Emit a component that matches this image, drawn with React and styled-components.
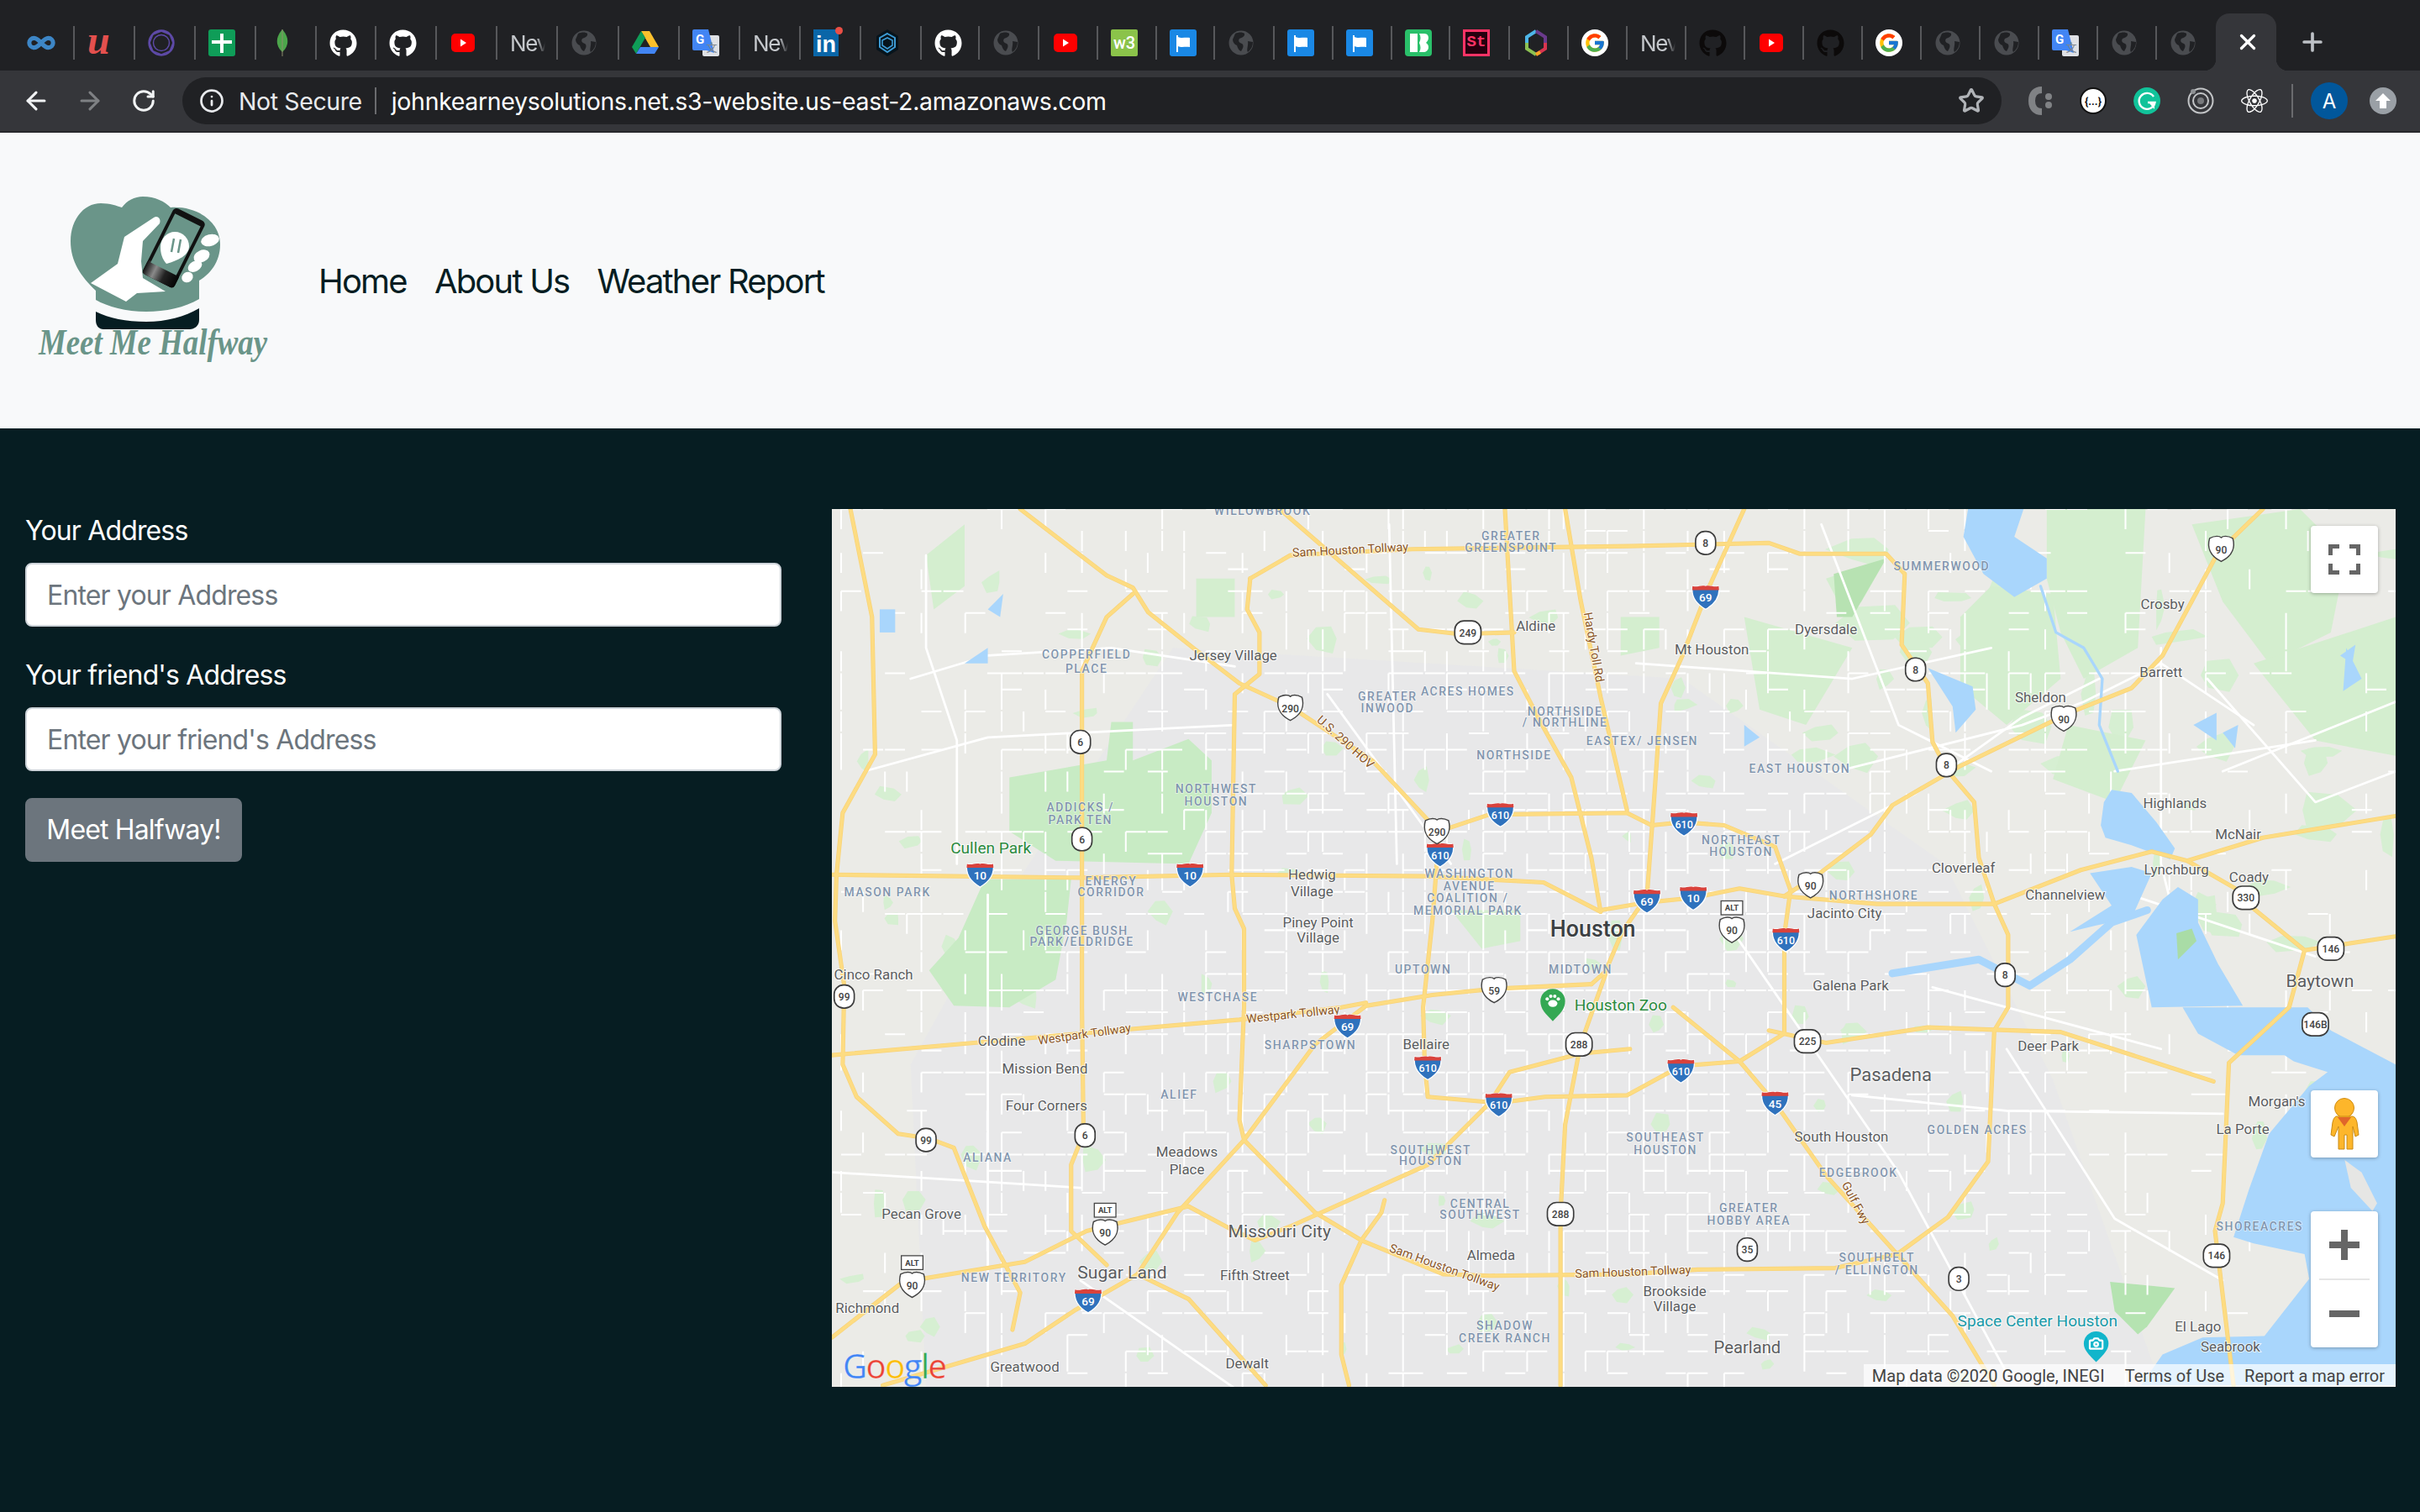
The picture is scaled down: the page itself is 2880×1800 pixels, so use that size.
import styled, { createGlobalStyle } from 'styled-components';
import { FaGithub, FaReact } from 'react-icons/fa';
import { FcGoogle } from 'react-icons/fc';
import { ArrowLeft, ArrowRight, RotateCw, Info, Star, X, Plus, Infinity as InfinityIcon, Camera } from 'lucide-react';

const UI_FONT = `Inter, "Liberation Sans", sans-serif`;
const MAP_FONT = `Roboto, "Liberation Sans", sans-serif`;

const GlobalStyle = createGlobalStyle`
  html, body { margin: 0; padding: 0; background: #061d22; }
  * { box-sizing: border-box; }
`;

const tabs = [
  ['infinity', 72], ['u', 72], ['ring', 72], ['cross', 72], ['leaf', 72], ['github', 71], ['github', 72], ['youtube', 72],
  ['nev', 72], ['globe', 73], ['drive', 72], ['translate', 72], ['nev', 72], ['linkedin', 72], ['hex', 72], ['github', 69],
  ['globe', 71], ['youtube', 70], ['w3', 70], ['flag', 69], ['globe', 71], ['flag', 70], ['flag', 70], ['bolt', 69],
  ['st', 71], ['hexcolor', 70], ['google', 70], ['nev', 70], ['githubdark', 70], ['youtube', 70], ['githubdark', 70],
  ['google', 70], ['globe', 70], ['globe', 70], ['translate', 70], ['globe', 70], ['globe', 70],
];

const TabIcon = ({ kind }) => {
  switch (kind) {
    case 'infinity':
      return <InfinityIcon size={34} color="#3d86c6" strokeWidth={3.6} />;
    case 'u':
      return <ULogo>u</ULogo>;
    case 'ring':
      return (
        <svg width="32" height="32" viewBox="0 0 32 32" fill="none" stroke="#5e4aa8">
          <circle cx="16" cy="16" r="14.5" strokeWidth="2.4" />
          <circle cx="16" cy="16" r="9.5" strokeWidth="1.4" />
          <path d="M16 2 26 6 30 16 26 26 16 30 6 26 2 16 6 6Z" strokeWidth="1.4" />
        </svg>
      );
    case 'cross':
      return (
        <svg width="32" height="32" viewBox="0 0 32 32">
          <rect width="32" height="32" rx="3" fill="#0f9d58" />
          <path d="M14 5h4v8h10v4H18v11h-4V17H4v-4h10z" fill="#fff" />
        </svg>
      );
    case 'leaf':
      return (
        <svg width="32" height="32" viewBox="0 0 32 32">
          <path d="M16 0c5 6 7 11 6 17-1 5-4 8-6 10-2-2-5-5-6-10-1-6 1-11 6-17z" fill="#4ca64b" />
          <path d="M16 0v32" stroke="#8d8d6d" strokeWidth="1" />
        </svg>
      );
    case 'github':
      return <FaGithub size={33} color="#fff" />;
    case 'githubdark':
      return <FaGithub size={33} color="#0c0a0a" />;
    case 'youtube':
      return (
        <svg width="32" height="32" viewBox="0 0 32 32">
          <rect x="2" y="5" width="28" height="22" rx="5" fill="#f00" />
          <path d="M13 11.500 20 16l-7 4.500z" fill="#fff" />
        </svg>
      );
    case 'nev':
      return <NewTabText>Nev</NewTabText>;
    case 'globe':
      return (
        <svg width="32" height="32" viewBox="0 0 32 32">
          <circle cx="16" cy="16" r="14.500" fill="#4a4c50" />
          <path d="M9 5c4-2 9-2 11 0 1 3-3 5-6 6-2 3 0 5 3 6 3 2 1 6-1 9-3-1-4-4-5-7-3-1-5-4-5-7zM24 14l6 1c0 5-2 9-6 12-2-3 1-8 0-13z" fill="#202124" />
        </svg>
      );
    case 'drive':
      return (
        <svg width="32" height="32" viewBox="0 0 32 32">
          <path d="M11 2h10l11 19H22z" fill="#fbc02d" />
          <path d="M11 2 0 21l5 8 11-19z" fill="#0f9d58" />
          <path d="M10 21h22l-5 8H5z" fill="#4285f4" />
        </svg>
      );
    case 'translate':
      return (
        <svg width="32" height="32" viewBox="0 0 32 32">
          <rect x="12" y="7" width="20" height="25" rx="2" fill="#dfe1e5" />
          <path d="M0 2a2 2 0 0 1 2-2h17l7 28-9-3H2a2 2 0 0 1-2-2z" fill="#4285f4" />
          <text x="9" y="17" fontFamily={MAP_FONT} fontSize="15" fontWeight="700" fill="#fff" textAnchor="middle">G</text>
          <text x="23" y="26" fontFamily={`"Noto Sans CJK SC", sans-serif`} fontSize="13" fill="#80868b" textAnchor="middle">文</text>
        </svg>
      );
    case 'linkedin':
      return <LinkedIn>in</LinkedIn>;
    case 'hex':
      return (
        <svg width="32" height="32" viewBox="0 0 32 32">
          <path d="M16 0 29 8v16L16 32 3 24V8z" fill="#07141c" />
          <path d="M16 5 25 10v11l-9 6-9-6V10z" fill="none" stroke="#3d9bd4" strokeWidth="2" />
          <path d="M10 13l6-3 6 3v6l-6 4-6-4z" fill="none" stroke="#3d9bd4" strokeWidth="1.6" />
        </svg>
      );
    case 'w3':
      return <W3Logo>w3</W3Logo>;
    case 'flag':
      return (
        <svg width="32" height="32" viewBox="0 0 32 32">
          <rect width="32" height="32" rx="3" fill="#1a88e5" />
          <path d="M8 7h2v2c4 2 9 0 14 1v11c-5-1-10 1-14-1v7H8z" fill="#fff" />
        </svg>
      );
    case 'bolt':
      return (
        <svg width="32" height="32" viewBox="0 0 32 32">
          <rect width="32" height="32" rx="4" fill="#2ac06a" />
          <path d="M6 5h9v22H6zM17 5h6c4 0 5 3 5 5 0 3-2 5-3 6 2 1 3 3 3 5 0 4-3 6-6 6h-5c2-3 2-7 0-11 2-4 2-8 0-11z" fill="#fff" />
        </svg>
      );
    case 'st':
      return <StLogo>St</StLogo>;
    case 'hexcolor':
      return (
        <svg width="32" height="32" viewBox="0 0 32 32" fill="none" strokeWidth="4">
          <path d="M16 2 5 9v7" stroke="#4db6e8" />
          <path d="M16 2l11 7v7" stroke="#6a3a8c" />
          <path d="M27 16v7L16 30" stroke="#d8354f" />
          <path d="M5 16v7l11 7" stroke="#8cc152" />
          <path d="M16 30l5-3" stroke="#f5a623" />
        </svg>
      );
    case 'google':
      return <GoogleCircle><FcGoogle size={26} /></GoogleCircle>;
    default:
      return null;
  }
};

const TabStrip = styled.div`
  height: 84px;
  background: #202124;
  display: flex;
  align-items: flex-start;
  padding: 16px 0 0 17px;
`;

const Tab = styled.div`
  width: ${(p) => p.$width}px;
  height: 40px;
  margin-top: 15px;
  padding-left: 15px;
  display: flex;
  align-items: center;
  justify-content: flex-start;
  border-right: ${(p) => (p.$last ? 'none' : '2px solid #57585b')};
`;

const ActiveTab = styled.div`
  position: relative;
  width: 72px;
  height: 68px;
  background: #35363a;
  border-radius: 16px 16px 0 0;
  display: flex;
  align-items: center;
  justify-content: center;
  padding: 0 0 1px 3px;
  color: #fff;

  &::before, &::after {
    content: '';
    position: absolute;
    bottom: 0;
    width: 14px;
    height: 14px;
  }
  &::before {
    left: -14px;
    background: radial-gradient(circle at 0 0, transparent 14px, #35363a 14.5px);
  }
  &::after {
    right: -14px;
    background: radial-gradient(circle at 100% 0, transparent 14px, #35363a 14.5px);
  }
`;

const NewTabButton = styled.div`
  margin: 17px 0 0 26px;
  color: #bdc1c6;
  display: flex;
`;

const ULogo = styled.span`
  font: italic 700 48px "Liberation Serif", serif;
  color: #e4504e;
  line-height: 32px;
  margin-top: -6px;
`;

const NewTabText = styled.span`
  width: 42px;
  overflow: hidden;
  font: 400 26px ${UI_FONT};
  letter-spacing: -1.4px;
  color: #c4c7cb;
  white-space: nowrap;
  -webkit-mask-image: linear-gradient(90deg, #000 75%, transparent);
  mask-image: linear-gradient(90deg, #000 75%, transparent);
`;

const LinkedIn = styled.span`
  width: 30px;
  height: 32px;
  background: #0a66a8;
  color: #fff;
  font: 700 27px "Liberation Sans", sans-serif;
  line-height: 36px;
  text-align: center;
  position: relative;

  &::after {
    content: '';
    position: absolute;
    top: -3px;
    right: -5px;
    width: 9px;
    height: 9px;
    border-radius: 50%;
    background: #ea4f46;
  }
`;

const W3Logo = styled.span`
  width: 32px;
  height: 32px;
  background: #8bc34a;
  border-radius: 2px;
  color: #fff;
  font: 500 20px ${MAP_FONT};
  line-height: 32px;
  text-align: center;
`;

const StLogo = styled.span`
  width: 32px;
  height: 32px;
  background: #26000f;
  border: 3px solid #ff3366;
  color: #ff3366;
  font: 700 19px "Liberation Mono", monospace;
  line-height: 25px;
  text-align: center;
`;

const GoogleCircle = styled.span`
  width: 32px;
  height: 32px;
  border-radius: 50%;
  background: #fff;
  display: flex;
  align-items: center;
  justify-content: center;
`;

const Toolbar = styled.div`
  height: 74px;
  background: #35363a;
  border-bottom: 2px solid #27282b;
  display: flex;
  align-items: center;
  padding-left: 11px;
`;

const NavButton = styled.div`
  width: 64px;
  height: 56px;
  display: flex;
  align-items: center;
  justify-content: center;
  color: ${(p) => (p.$disabled ? '#7f8184' : '#f1f3f4')};
`;

const Omnibox = styled.div`
  width: 2165px;
  height: 56px;
  margin-left: 14px;
  border-radius: 28px;
  background: #202124;
  display: flex;
  align-items: center;
  padding: 0 20px 0 20px;
  font: 400 28.5px ${UI_FONT};
  color: #e8eaed;
`;

const SecureText = styled.span`
  margin-left: 17px;
  letter-spacing: -0.4px;
`;

const OmniDivider = styled.span`
  width: 2px;
  height: 32px;
  margin: 0 18px 0 15px;
  background: #6a6b6e;
`;

const UrlText = styled.span`
  color: #fff;
  letter-spacing: -0.34px;
`;

const StarButton = styled.span`
  margin-left: auto;
  display: flex;
  color: #b0b3b7;
`;

const Extensions = styled.div`
  display: flex;
  align-items: center;
  margin-left: 13px;
  height: 56px;
`;

const ExtButton = styled.div`
  width: 64px;
  height: 56px;
  display: flex;
  align-items: center;
  justify-content: center;
`;

const ToolbarDivider = styled.span`
  width: 2px;
  height: 40px;
  margin: 0 21px 0 12px;
  background: #6a6b6e;
`;

const Avatar = styled.span`
  width: 44px;
  height: 44px;
  border-radius: 50%;
  background: #01579b;
  color: #fff;
  font: 400 24px ${UI_FONT};
  display: flex;
  align-items: center;
  justify-content: center;
`;

const UpgradeDot = styled.span`
  width: 32px;
  height: 32px;
  margin-left: 26px;
  border-radius: 50%;
  background: #9aa0a6;
  display: flex;
  align-items: center;
  justify-content: center;
`;

const Header = styled.header`
  height: 352px;
  background: #f8f9fa;
  display: flex;
  align-items: center;
  padding-left: 30px;
`;

const NavLinks = styled.nav`
  display: flex;
  gap: 33px;
  margin: 0 0 0 29px;
`;

const NavLink = styled.a`
  font: 400 40px ${UI_FONT};
  letter-spacing: -1.8px;
  color: #061d22;
  text-decoration: none;
`;

const Main = styled.main`
  display: flex;
  align-items: flex-start;
  gap: 60px;
  min-height: 1290px;
  padding: 96px 29px 0 30px;
  background: #061d22;
`;

const Form = styled.form`
  width: 900px;
  flex: none;
  font: 400 32px/48px ${UI_FONT};
  letter-spacing: -0.85px;
`;

const FieldLabel = styled.label`
  display: block;
  color: #fff;
  padding-top: 2px;
  margin-bottom: 14px;
`;

const TextInput = styled.input`
  display: block;
  width: 100%;
  height: 76px;
  margin-bottom: 32px;
  padding: 0 24px;
  border: 2px solid #ced4da;
  border-radius: 8px;
  background: #fff;
  font: inherit;
  letter-spacing: inherit;
  outline: none;

  &::placeholder { color: #6c757d; opacity: 1; }
`;

const SubmitButton = styled.button`
  height: 76px;
  width: 258px;
  padding: 0;
  border: 2px solid #6c757d;
  border-radius: 8px;
  background: #6c757d;
  color: #fff;
  font: inherit;
  letter-spacing: inherit;
`;

const MapFrame = styled.section`
  position: relative;
  width: 1861px;
  height: 1045px;
  flex: none;
  overflow: hidden;
  background: #ebebe7;
`;

const MapCanvas = styled.svg`
  display: block;
  width: 100%;
  height: 100%;
`;

const PlaceText = styled.text`
  font-family: ${MAP_FONT};
  font-size: ${(p) => p.$size || 9.2}px;
  font-weight: ${(p) => p.$weight || 400};
  fill: ${(p) => p.$color || '#5b5d60'};
  text-anchor: middle;
  stroke: #fff;
  stroke-width: 1.1px;
  stroke-opacity: 0.75;
  paint-order: stroke;
`;

const DistrictText = styled.text`
  font-family: ${MAP_FONT};
  font-size: 7.6px;
  font-weight: 500;
  letter-spacing: 0.85px;
  fill: #8195ae;
  text-anchor: middle;
  stroke: #fff;
  stroke-width: 0.8px;
  stroke-opacity: 0.6;
  paint-order: stroke;
`;

const RoadText = styled.text`
  font-family: ${MAP_FONT};
  font-size: 7.8px;
  fill: #8a5526;
  text-anchor: middle;
  stroke: #fff;
  stroke-width: 1px;
  stroke-opacity: 0.8;
  paint-order: stroke;
`;

const ShieldText = styled.text`
  font-family: ${MAP_FONT};
  font-size: ${(p) => p.$size || 6.6}px;
  font-weight: ${(p) => p.$weight || 500};
  fill: ${(p) => p.$color || '#444'};
  text-anchor: middle;
`;

const MapControl = styled.div`
  position: absolute;
  right: 21px;
  top: ${(p) => p.$top}px;
  width: 80px;
  height: ${(p) => p.$height}px;
  background: #fff;
  border-radius: 4px;
  box-shadow: 0 1px 4px rgba(0, 0, 0, 0.3);
  display: flex;
  flex-direction: column;
  align-items: center;
  justify-content: center;
`;

const ZoomPart = styled.div`
  flex: 1;
  width: 100%;
  display: flex;
  align-items: center;
  justify-content: center;
`;

const ZoomDivider = styled.div`
  width: 60px;
  height: 2px;
  background: #e6e6e6;
`;

const Attribution = styled.div`
  position: absolute;
  right: 0;
  bottom: 0;
  height: 27px;
  padding: 0 13px 0 10px;
  display: flex;
  align-items: center;
  gap: 24px;
  background: rgba(255, 255, 255, 0.7);
  font: 400 20px ${MAP_FONT};
  color: #444;
  white-space: nowrap;
`;

const GoogleMark = styled.div`
  position: absolute;
  left: 13px;
  bottom: 2px;
  font: 500 40px "Open Sans", sans-serif;
  letter-spacing: -1.5px;
  line-height: 46px;
  -webkit-text-stroke: 0.5px rgba(255, 255, 255, 0.5);
`;

const MarkLetter = styled.span`
  color: ${(p) => p.$color};
`;

const towns = [
  ['Aldine', 995, 409], ['Jersey Village', 799, 428], ['Mt Houston', 1109, 424], ['Dyersdale', 1183, 411], ['Crosby', 1401, 395],
  ['Barrett', 1400, 439], ['Sheldon', 1322, 455], ['Highlands', 1409, 524], ['McNair', 1450, 544], ['Lynchburg', 1410, 567],
  ['Coady', 1457, 572], ['Channelview', 1338, 583], ['Cloverleaf', 1272, 566], ['Jacinto City', 1195, 595], ['Galena Park', 1199, 642],
  ['Baytown', 1503, 640, 11.5], ['Deer Park', 1327, 681], ['Pasadena', 1225, 701, 12], ["Morgan's", 1475, 717], ['La Porte', 1453, 735],
  ['South Houston', 1193, 740], ['Bellaire', 924, 680], ['Clodine', 649, 678], ['Mission Bend', 677, 696], ['Four Corners', 678, 720],
  ['Meadows', 769, 750], ['Place', 769, 761], ['Hedwig', 850, 570], ['Village', 850, 581], ['Piney Point', 854, 601], ['Village', 854, 611],
  ['Cinco Ranch', 566, 635], ['Pecan Grove', 597, 790], ['Missouri City', 829, 802, 11.5], ['Sugar Land', 727, 829, 11.5],
  ['Fifth Street', 813, 830], ['Almeda', 966, 817], ['Brookside', 1085, 840], ['Village', 1085, 850], ['Richmond', 562, 851],
  ['Greatwood', 664, 889], ['Dewalt', 808, 887], ['Pearland', 1132, 877, 11], ['El Lago', 1424, 863], ['Seabrook', 1445, 876],
];

const districts = [
  ['WILLOWBROOK', 818, 334], ['GREATER', 979, 350], ['GREENSPOINT', 979, 358], ['COPPERFIELD', 704, 427], ['PLACE', 704, 436],
  ['GREATER', 899, 454], ['INWOOD', 899, 462], ['ACRES HOMES', 951, 451], ['NORTHSIDE', 1014, 464], ['/ NORTHLINE', 1014, 471],
  ['EASTEX/ JENSEN', 1064, 483], ['NORTHSIDE', 981, 492], ['SUMMERWOOD', 1258, 370], ['EAST HOUSTON', 1166, 501],
  ['ADDICKS /', 700, 526], ['PARK TEN', 700, 534], ['NORTHWEST', 788, 514], ['HOUSTON', 788, 522], ['NORTHEAST', 1128, 547], ['HOUSTON', 1128, 555],
  ['WASHINGTON', 952, 569], ['AVENUE', 952, 577], ['COALITION /', 951, 585], ['MEMORIAL PARK', 951, 593], ['NORTHSHORE', 1214, 583],
  ['MASON PARK', 575, 581], ['ENERGY', 720, 574], ['CORRIDOR', 720, 581], ['GEORGE BUSH', 701, 606], ['PARK/ELDRIDGE', 701, 613],
  ['UPTOWN', 922, 631], ['MIDTOWN', 1024, 631], ['WESTCHASE', 789, 649], ['SHARPSTOWN', 849, 680], ['ALIEF', 764, 712],
  ['ALIANA', 640, 753], ['SOUTHWEST', 927, 748], ['HOUSTON', 927, 755], ['SOUTHEAST', 1079, 740], ['HOUSTON', 1079, 748],
  ['GOLDEN ACRES', 1281, 735], ['EDGEBROOK', 1204, 763], ['CENTRAL', 959, 783], ['SOUTHWEST', 959, 790], ['GREATER', 1133, 786], ['HOBBY AREA', 1133, 794],
  ['SHOREACRES', 1464, 798], ['SOUTHBELT', 1216, 818], ['/ ELLINGTON', 1216, 826], ['NEW TERRITORY', 657, 831], ['SHADOW', 975, 862], ['CREEK RANCH', 975, 870],
];

const roadLabels = [
  ['Sam Houston Tollway', 875, 359, -3], ['Westpark Tollway', 703, 673, -8], ['Westpark Tollway', 838, 660, -6], ['U.S. 290 HOV', 870, 483, 42],
  ['Hardy Toll Rd', 1030, 420, 80], ['Sam Houston Tollway', 935, 824, 20], ['Sam Houston Tollway', 1058, 827, -2], ['Gulf Fwy', 1200, 781, 62],
];

const highways = [
  '539,567 700,569 798,567 925,568 1000,572 1037,591',
  '1037,590 1067,585 1097,582 1127,576 1156,581 1216,586 1292,586 1348,564 1394,552 1417,558 1466,543 1552,529',
  '932,539 965,528 1054,527 1070,535 1090,533 1117,535 1150,549 1160,577 1156,606 1156,670 1127,688 1089,691 1054,710 1001,711 971,715 925,711 923,689 922,653 928,597 932,545',
  '661,330 717,373 734,381 744,397 773,420 803,443 836,458 889,493 932,539',
  '551,330 565,400 567,489 546,527 542,567 541,597 547,639 546,690 555,711 582,735 602,738 618,744 638,795 661,838 656,862',
  '810,375 836,360 915,356 1056,354 1146,352 1166,359 1222,359 1234,372 1232,418 1249,443 1252,481 1262,500 1279,520 1282,556 1292,586 1301,606 1301,653 1292,668 1288,753 1262,789 1229,813',
  '810,375 808,395 816,410 816,437 800,450 798,567 800,589 806,602 806,653 803,726 806,739 852,786 882,804 935,826 965,827 1056,826 1100,823 1189,822 1229,813',
  '572,898 664,871 697,849 737,826 763,786 806,739 852,677 885,652 928,645 968,641 1031,638',
  '539,684 631,676 803,661 869,653 885,650',
  '539,867 585,831 664,818 704,798 770,782 796,796 813,804 836,795 925,755 965,715',
  '965,715 978,695 1024,683 1056,680',
  '734,385 717,400 701,435 701,653 702,735 694,755 694,798 717,820',
  '1040,632 1024,677 1014,729 1011,787 1011,898',
  '897,778 895,786 882,804 869,833 869,878 874,898',
  '737,826 770,842 820,898',
  '975,330 981,435 998,468 1018,504 1031,556 1037,591',
  '1130,330 1107,381 1090,425 1076,456 1071,527 1067,581 1051,604',
  '1014,330 1024,389 1037,452 1054,525',
  '829,330 919,408 945,411 981,410',
  '1084,653 1127,688 1150,715 1183,762 1229,813 1265,853 1292,898',
  '1466,330 1437,358 1401,425 1381,446 1341,462 1269,497 1226,522 1212,541 1179,566 1156,581',
  '1552,607 1493,616 1483,653 1444,689 1440,780 1435,798 1447,898',
  '1417,558 1450,577 1460,589 1493,616',
  '1146,668 1183,676 1249,666 1335,669 1434,701',
  '1031,638 1040,630 1051,604',
];

const parks = [
  '720,468 734,468 734,493 770,479 785,493 785,527 770,560 684,558 654,539 654,504 717,493',
  '638,570 694,570 691,598 684,635 654,653 618,652 602,629 621,608',
  '1183,375 1222,362 1206,390 1195,398',
  '1270,400 1290,380 1330,385 1335,440 1300,470 1270,445',
  '1326,330 1390,330 1385,420 1350,440 1335,410 1326,375',
  '1420,340 1490,330 1520,360 1510,410 1470,430 1440,390',
  '1460,430 1552,400 1552,490 1500,480',
  '1130,400 1200,420 1170,470 1140,460',
  '1050,400 1075,400 1075,420 1050,425',
  '1340,470 1390,480 1370,520 1330,505',
  '600,360 625,340 625,380 605,395',
  '775,375 800,375 800,400 775,400',
  '940,590 985,590 985,610 960,615',
];

const waters = [
  '1275,330 1311,330 1305,348 1326,362 1326,375 1305,387 1285,372 1272,348',
  '1249,433 1278,445 1280,460 1267,475 1265,458',
  '1363,520 1368,512 1381,514 1397,533 1409,550 1406,557 1381,548 1364,543 1361,535',
  '1354,566 1381,562 1394,566 1381,595 1358,600 1341,604 1368,587',
  '1411,575 1424,583 1424,598 1437,625 1453,652 1394,653 1384,606 1401,583',
  '1414,653 1424,670 1450,684 1480,684 1486,688 1508,695 1496,704 1470,735 1457,771 1447,802 1460,806 1493,813 1496,829 1467,866 1427,867 1401,878 1387,898 1552,898 1552,690 1510,668 1495,653',
  '1421,470 1436,462 1436,480',
  '1520,420 1530,440 1518,448',
  '1516,425 1526,418 1524,430',
  '1440,475 1450,470 1448,485',
  '1130,470 1140,478 1130,484',
  '570,395 580,395 580,410 570,410',
  '640,395 650,385 648,400',
  '625,430 640,430 640,420',
];

const channel = '1226,631 1282,622 1315,639 1341,622 1368,598 1391,590';
const bayou = '1322,380 1332,410 1350,420 1362,440 1360,470 1372,500';

const hash = (a, b) => {
  const s = Math.sin(a * 127.1 + b * 311.7) * 43758.5453;
  return s - Math.floor(s);
};

const STEP = 13;

const streetGrid = (() => {
  const parts = [];
  for (let x = 545, c = 0; x < 1552; x += STEP, c++) {
    for (let y = 330, r = 0; y < 899; y += STEP, r++) {
      const d = Math.hypot(x - 1000, y - 650);
      const p = Math.max(0.08, Math.min(0.92, 1.05 - d / 480));
      const major = d < 430 ? 0.6 : 0.28;
      const px = x + (c % 4) * 1.2;
      const py = y + (r % 3) * 1.2;
      const vChance = c % 4 === 0 ? Math.max(p, major) : p * (c % 2 ? 0.45 : 0.8);
      const hChance = r % 4 === 0 ? Math.max(p, major) : p * (r % 2 ? 0.45 : 0.8);
      if (hash(c, r) < vChance) parts.push(`M${px} ${py}V${py + STEP}`);
      if (hash(r + 50, c) < hChance) parts.push(`M${px} ${py}H${px + STEP}`);
    }
  }
  return parts.join('');
})();

const greenBlobs = (() => {
  const blobs = [];
  for (let i = 0; i < 260; i++) {
    const x = 539 + hash(i, 3) * 1013;
    const y = 330 + hash(i, 7) * 569;
    const east = x > 1170 && y < 620;
    if (!east && hash(i, 11) < 0.6) continue;
    const w = 3 + hash(i, 13) * (east ? 20 : 8);
    const h = 3 + hash(i, 17) * (east ? 13 : 8);
    const pts = [0, 1, 2, 3, 4, 5].map((k) => {
      const a = (k * Math.PI) / 3;
      const j = 0.55 + hash(i, k + 20) * 0.6;
      return `${(x + Math.cos(a) * w * j).toFixed(1)},${(y + Math.sin(a) * h * j).toFixed(1)}`;
    });
    blobs.push(pts.join(' '));
  }
  return blobs;
})();

const arterials = [
  '590,440 640,425 720,420 800,432', '600,360 600,420 620,480 620,560', '560,500 640,478 700,475 800,470', '900,340 905,560', '1060,430 1200,440 1290,420',
  '1190,500 1310,470 1350,455 1400,430 1460,470', '1150,560 1240,515 1310,465 1360,440', '1400,420 1400,560 1420,640', '1252,640 1400,680', '1200,710 1300,720 1440,722',
  '1300,680 1370,790 1440,830', '1120,600 1230,760 1300,890', '1440,500 1552,455', '1380,580 1500,620', '640,580 640,900', '540,760 700,770', '700,830 800,900',
  '1370,500 1500,480', '1430,440 1500,520 1552,500', '860,450 940,560', '1180,340 1230,470 1290,500',
];

const Polyline = ({ points, color, width }) => (
  <polyline points={points} fill="none" stroke={color} strokeWidth={width} strokeLinejoin="round" strokeLinecap="round" />
);

const Interstate = ({ x, y, label }) => (
  <g transform={`translate(${x} ${y})`}>
    <path d="M-8.500-7C-5-6-3-8 0-7 3-8 5-6 8.500-7 9.500-1 7 4 0 8-7 4-9.500-1-8.500-7z" fill="#2f72bd" stroke="#fff" strokeWidth="0.7" />
    <path d="M-8.500-7C-5-6-3-8 0-7 3-8 5-6 8.500-7L8.700-4.500H-8.700z" fill="#d9423c" />
    <ShieldText y="3" $color="#fff" $size={label.length > 2 ? 6.8 : 7.4}>{label}</ShieldText>
  </g>
);

const UsRoute = ({ x, y, label, alt }) => (
  <g transform={`translate(${x} ${y})`}>
    <path d="M-7.500-7C-4-9-1-8.500 0-7.500 1-8.500 4-9 7.500-7 9-2 8 4 0 8-8 4-9-2-7.500-7z" fill="#fff" stroke="#444" strokeWidth="0.8" />
    <ShieldText y="2.600">{label}</ShieldText>
    {alt && (
      <g>
        <rect x="-7" y="-19" width="14" height="9" fill="#fff" stroke="#444" strokeWidth="0.7" />
        <ShieldText y="-12.500" $size={5.2} $weight={700}>ALT</ShieldText>
      </g>
    )}
  </g>
);

const StateRoute = ({ x, y, label }) => {
  const w = label.length > 2 ? 17 : 13;
  return (
    <g transform={`translate(${x} ${y})`}>
      <rect x={-w / 2} y="-7.500" width={w} height="15" rx="6" fill="#fff" stroke="#3c3c3c" strokeWidth="0.9" />
      <ShieldText y="2.500">{label}</ShieldText>
    </g>
  );
};

const interstates = [
  [635, 567, '10'], [771, 567, '10'], [1097, 582, '10'], [972, 528, '610'], [1091, 534, '610'], [933, 554, '610'], [1157, 609, '610'],
  [925, 692, '610'], [971, 716, '610'], [1089, 694, '610'], [1105, 387, '69'], [1067, 584, '69'], [873, 665, '69'], [705, 843, '69'], [1150, 715, '45'],
];
const usRoutes = [
  [836, 459, '290'], [931, 539, '290'], [1439, 356, '90'], [1337, 466, '90'], [1173, 574, '90'], [1122, 603, '90', true], [716, 799, '90', true], [591, 833, '90', true], [968, 642, '59'],
];
const stateRoutes = [
  [1105, 352, '8'], [1241, 434, '8'], [1261, 496, '8'], [1299, 632, '8'], [700, 481, '6'], [701, 544, '6'], [703, 736, '6'], [951, 410, '249'], [547, 646, '99'], [600, 739, '99'],
  [1023, 677, '288'], [1011, 787, '288'], [1171, 675, '225'], [1132, 810, '35'], [1269, 829, '3'], [1510, 615, '146'], [1436, 814, '146'], [1500, 664, '146B'], [1455, 582, '330'],
];

const MapView = () => (
  <MapFrame>
    <MapCanvas viewBox="539 330 1013 569" preserveAspectRatio="none">
      <rect x="539" y="330" width="1013" height="569" fill="#ebebe7" />
      <polygon points="760,420 1090,440 1260,560 1330,700 1400,899 600,899 590,690 640,600" fill="#e8e8e9" />
      {greenBlobs.map((b, i) => (
        <polygon key={i} points={b} fill="#d6efd2" />
      ))}
      {parks.map((p, i) => (
        <polygon key={i} points={p} fill={i < 2 ? '#c8ebc4' : '#d4eecf'} />
      ))}
      <polygon points="1188,372 1222,362 1200,400 1190,400" fill="#b7e2b2" />
      <polygon points="1367,831 1409,835 1391,860 1385,865 1370,850" fill="#b5e3b1" />
      <path d={streetGrid} stroke="#fff" strokeWidth="1.1" fill="none" />
      {arterials.map((p, i) => (
        <Polyline key={i} points={p} color="#fff" width={1.5} />
      ))}
      {waters.map((p, i) => (
        <polygon key={i} points={p} fill="#a9d6fc" />
      ))}
      <Polyline points={channel} color="#a9d6fc" width={5} />
      <Polyline points={bayou} color="#a9d6fc" width={1.8} />
      <polygon points="1420,602 1410,605 1411,622 1423,610" fill="#a9dca6" />
      <polygon points="1519,752 1530,760 1540,780 1537,785 1523,770" fill="#e6e6e4" />
      {highways.map((p, i) => (
        <Polyline key={i} points={p} color="#f8d37a" width={2.8} />
      ))}
      {highways.map((p, i) => (
        <Polyline key={i} points={p} color="#fddc82" width={2} />
      ))}

      {districts.map(([t, x, y], i) => (
        <DistrictText key={i} x={x} y={y}>{t}</DistrictText>
      ))}
      {towns.map(([t, x, y, size], i) => (
        <PlaceText key={i} x={x} y={y} $size={size}>{t}</PlaceText>
      ))}
      <PlaceText x={1032} y={607} $size={14.6} $weight={500} $color="#3c4043">Houston</PlaceText>
      <PlaceText x={642} y={553} $size={10.4} $color="#2b8a3e">Cullen Park</PlaceText>
      <PlaceText x={1050} y={655} $size={10.4} $color="#2b8a3e">Houston Zoo</PlaceText>
      <PlaceText x={1320} y={860} $size={10.4} $color="#1a9aa8">Space Center Houston</PlaceText>
      {roadLabels.map(([t, x, y, r], i) => (
        <RoadText key={i} x={x} y={y} transform={`rotate(${r} ${x} ${y})`}>{t}</RoadText>
      ))}

      {interstates.map(([x, y, l], i) => <Interstate key={i} x={x} y={y} label={l} />)}
      {usRoutes.map(([x, y, l, alt], i) => <UsRoute key={i} x={x} y={y} label={l} alt={alt} />)}
      {stateRoutes.map(([x, y, l], i) => <StateRoute key={i} x={x} y={y} label={l} />)}

      <g transform="translate(1006 651)">
        <path d="M0 11C-5 6-8 3-8-2a8 8 0 0 1 16 0C8 3 5 6 0 11z" fill="#34a853" />
        <ellipse cy="-0.500" rx="3" ry="2.300" fill="#fff" />
        <circle cx="-3.600" cy="-3.400" r="1.100" fill="#fff" />
        <circle cx="3.600" cy="-3.400" r="1.100" fill="#fff" />
        <circle cx="-1.300" cy="-5.200" r="1.100" fill="#fff" />
        <circle cx="1.300" cy="-5.200" r="1.100" fill="#fff" />
      </g>
      <g transform="translate(1358 873)">
        <path d="M0 10C-5 5-8 2-8-2a8 8 0 0 1 16 0C8 2 5 5 0 10z" fill="#12b5cb" />
        <Camera x="-5" y="-7" width="10" height="10" color="#fff" strokeWidth={3} />
      </g>
    </MapCanvas>

    <MapControl $top={20} $height={80}>
      <svg width="38" height="36" viewBox="0 0 38 36" fill="none" stroke="#666" strokeWidth="5">
        <path d="M2.500 13V2.500H13M25 2.500H35.500V13M35.500 23V33.500H25M13 33.500H2.500V23" />
      </svg>
    </MapControl>
    <MapControl $top={692} $height={80}>
      <svg width="36" height="62" viewBox="0 0 36 62">
        <circle cx="18" cy="12" r="11.500" fill="#fdb62b" stroke="#d08c12" strokeWidth="1" />
        <path d="M8 22h20c3 1 4 3 5 7l2 15-4 2-3-12v27h-7V44h-3v17H11V34L6 46l-4-2 2-15c1-4 2-6 4-7z" fill="#fdb62b" stroke="#c98a15" strokeWidth="1" />
        <path d="M10 23h16l-8 11z" fill="#e0662a" />
      </svg>
    </MapControl>
    <MapControl $top={836} $height={162}>
      <ZoomPart>
        <svg width="36" height="36" viewBox="0 0 36 36"><path d="M14 0h8v14h14v8H22v14h-8V22H0v-8h14z" fill="#666" /></svg>
      </ZoomPart>
      <ZoomDivider />
      <ZoomPart>
        <svg width="36" height="8" viewBox="0 0 36 8"><rect width="36" height="8" fill="#666" /></svg>
      </ZoomPart>
    </MapControl>

    <GoogleMark>
      <MarkLetter $color="#4285f4">G</MarkLetter>
      <MarkLetter $color="#ea4335">o</MarkLetter>
      <MarkLetter $color="#fbbc05">o</MarkLetter>
      <MarkLetter $color="#4285f4">g</MarkLetter>
      <MarkLetter $color="#34a853">l</MarkLetter>
      <MarkLetter $color="#ea4335">e</MarkLetter>
    </GoogleMark>
    <Attribution>
      <span>Map data ©2020 Google, INEGI</span>
      <span>Terms of Use</span>
      <span>Report a map error</span>
    </Attribution>
  </MapFrame>
);

const Logo = () => (
  <svg width="320" height="230" viewBox="30 220 320 230">
    <defs>
      <linearGradient id="phoneEdge" x1="0" y1="0" x2="1" y2="0">
        <stop offset="0" stopColor="#111" />
        <stop offset="0.3" stopColor="#8a8a8a" />
        <stop offset="0.6" stopColor="#222" />
        <stop offset="1" stopColor="#050505" />
      </linearGradient>
    </defs>
    <path d="M114 347C96 330 84 312 84 288 84 262 100 243 120 243 131 243 139 246 145 248 151 240 160 235 170 235 185 235 196 241 203 248 235 246 262 265 262 292 262 312 251 327 237 335V357C220 367 197 372 174 372 150 372 128 366 114 358z" fill="#6a9589" />
    <path d="M114 372C130 380 150 384 174 384 198 384 220 378 237 368V382C237 389 231 393 226 393H123C118 393 114 389 114 382z" fill="#061d22" />
    <path d="M183 260 148 283 140 315 108 338 150 360 163 350 197 348 170 332 168 312 170 288 190 267C192 262 188 257 183 260z" fill="#fff" />
    <g fill="#fff">
      <ellipse cx="250" cy="287" rx="11" ry="7" transform="rotate(-15 250 287)" />
      <ellipse cx="240" cy="306" rx="10" ry="7" transform="rotate(-25 240 306)" />
      <ellipse cx="232" cy="318" rx="9" ry="6" transform="rotate(-30 232 318)" />
      <ellipse cx="223" cy="331" rx="7" ry="6" transform="rotate(-35 223 331)" />
    </g>
    <g transform="rotate(26.500 207 296)">
      <rect x="186" y="252" width="42" height="88" rx="5" fill="#111" />
      <rect x="186" y="322" width="42" height="18" rx="4" fill="url(#phoneEdge)" />
      <rect x="190" y="259" width="34" height="65" fill="#6a9589" />
    </g>
    <path d="M198 315C193 309 191 303 191 295 191 285 199 277 208 277 218 277 225 285 225 294 225 305 212 311 198 315z" fill="#fff" />
    <path d="M204 301 207 285M212 302 215 286" stroke="#6a9589" strokeWidth="2.500" />
    <text x="182" y="423" textAnchor="middle" textLength="272" lengthAdjust="spacingAndGlyphs" fontFamily="'Liberation Serif', serif" fontStyle="italic" fontWeight="700" fontSize="44" fill="#6a9589">Meet Me Halfway</text>
  </svg>
);

const App = () => (
  <>
    <GlobalStyle />
    <TabStrip>
      {tabs.map(([kind, width], i) => (
        <Tab key={i} $width={width} $last={i === tabs.length - 1}>
          <TabIcon kind={kind} />
        </Tab>
      ))}
      <ActiveTab>
        <X size={30} strokeWidth={2.6} />
      </ActiveTab>
      <NewTabButton>
        <Plus size={34} strokeWidth={2.6} />
      </NewTabButton>
    </TabStrip>

    <Toolbar>
      <NavButton><ArrowLeft size={34} strokeWidth={2.2} /></NavButton>
      <NavButton $disabled><ArrowRight size={34} strokeWidth={2.2} /></NavButton>
      <NavButton><RotateCw size={30} strokeWidth={2.4} /></NavButton>
      <Omnibox>
        <Info size={30} strokeWidth={2.2} color="#e8eaed" />
        <SecureText>Not Secure</SecureText>
        <OmniDivider />
        <UrlText>johnkearneysolutions.net.s3-website.us-east-2.amazonaws.com</UrlText>
        <StarButton><Star size={32} strokeWidth={2.4} /></StarButton>
      </Omnibox>
      <Extensions>
        <ExtButton>
          <svg width="32" height="36" viewBox="0 0 32 36">
            <path d="M19 5C11 5 7 10 7 18s4 13 12 13" fill="none" stroke="#808285" strokeWidth="8" />
            <circle cx="27" cy="13" r="4" fill="#808285" />
            <circle cx="27" cy="23" r="4" fill="#808285" />
          </svg>
        </ExtButton>
        <ExtButton>
          <svg width="32" height="32" viewBox="0 0 32 32">
            <circle cx="16" cy="16" r="15" fill="#fff" stroke="#111" strokeWidth="2" />
            <text x="16" y="21" textAnchor="middle" fontFamily={MAP_FONT} fontSize="13" fontWeight="700" fill="#111">{'{...}'}</text>
          </svg>
        </ExtButton>
        <ExtButton>
          <svg width="32" height="32" viewBox="0 0 32 32">
            <circle cx="16" cy="16" r="16" fill="#11c39a" />
            <path d="M24 11a9.500 9.500 0 1 0 1.500 7H17" fill="none" stroke="#fff" strokeWidth="2.400" />
            <path d="M25 26v-7h-6z" fill="#fff" />
          </svg>
        </ExtButton>
        <ExtButton>
          <svg width="32" height="32" viewBox="0 0 32 32" fill="none" stroke="#c3c5c7" strokeWidth="2">
            <circle cx="16" cy="16" r="14.500" />
            <circle cx="16" cy="16" r="9" />
            <circle cx="16" cy="16" r="4" fill="#77797c" stroke="none" />
            <circle cx="7" cy="5" r="3" fill="#8e9194" stroke="none" />
          </svg>
        </ExtButton>
        <ExtButton><FaReact size={32} color="#fff" /></ExtButton>
      </Extensions>
      <ToolbarDivider />
      <Avatar>A</Avatar>
      <UpgradeDot>
        <svg width="18" height="18" viewBox="0 0 18 18"><path d="M9 0 18 9h-5v9H5V9H0z" fill="#fff" /></svg>
      </UpgradeDot>
    </Toolbar>

    <Header>
      <Logo />
      <NavLinks>
        <NavLink href="#">Home</NavLink>
        <NavLink href="#">About Us</NavLink>
        <NavLink href="#">Weather Report</NavLink>
      </NavLinks>
    </Header>

    <Main>
      <Form>
        <FieldLabel>Your Address</FieldLabel>
        <TextInput placeholder="Enter your Address" />
        <FieldLabel>Your friend's Address</FieldLabel>
        <TextInput placeholder="Enter your friend's Address" />
        <SubmitButton type="button">Meet Halfway!</SubmitButton>
      </Form>
      <MapView />
    </Main>
  </>
);

export default App;
